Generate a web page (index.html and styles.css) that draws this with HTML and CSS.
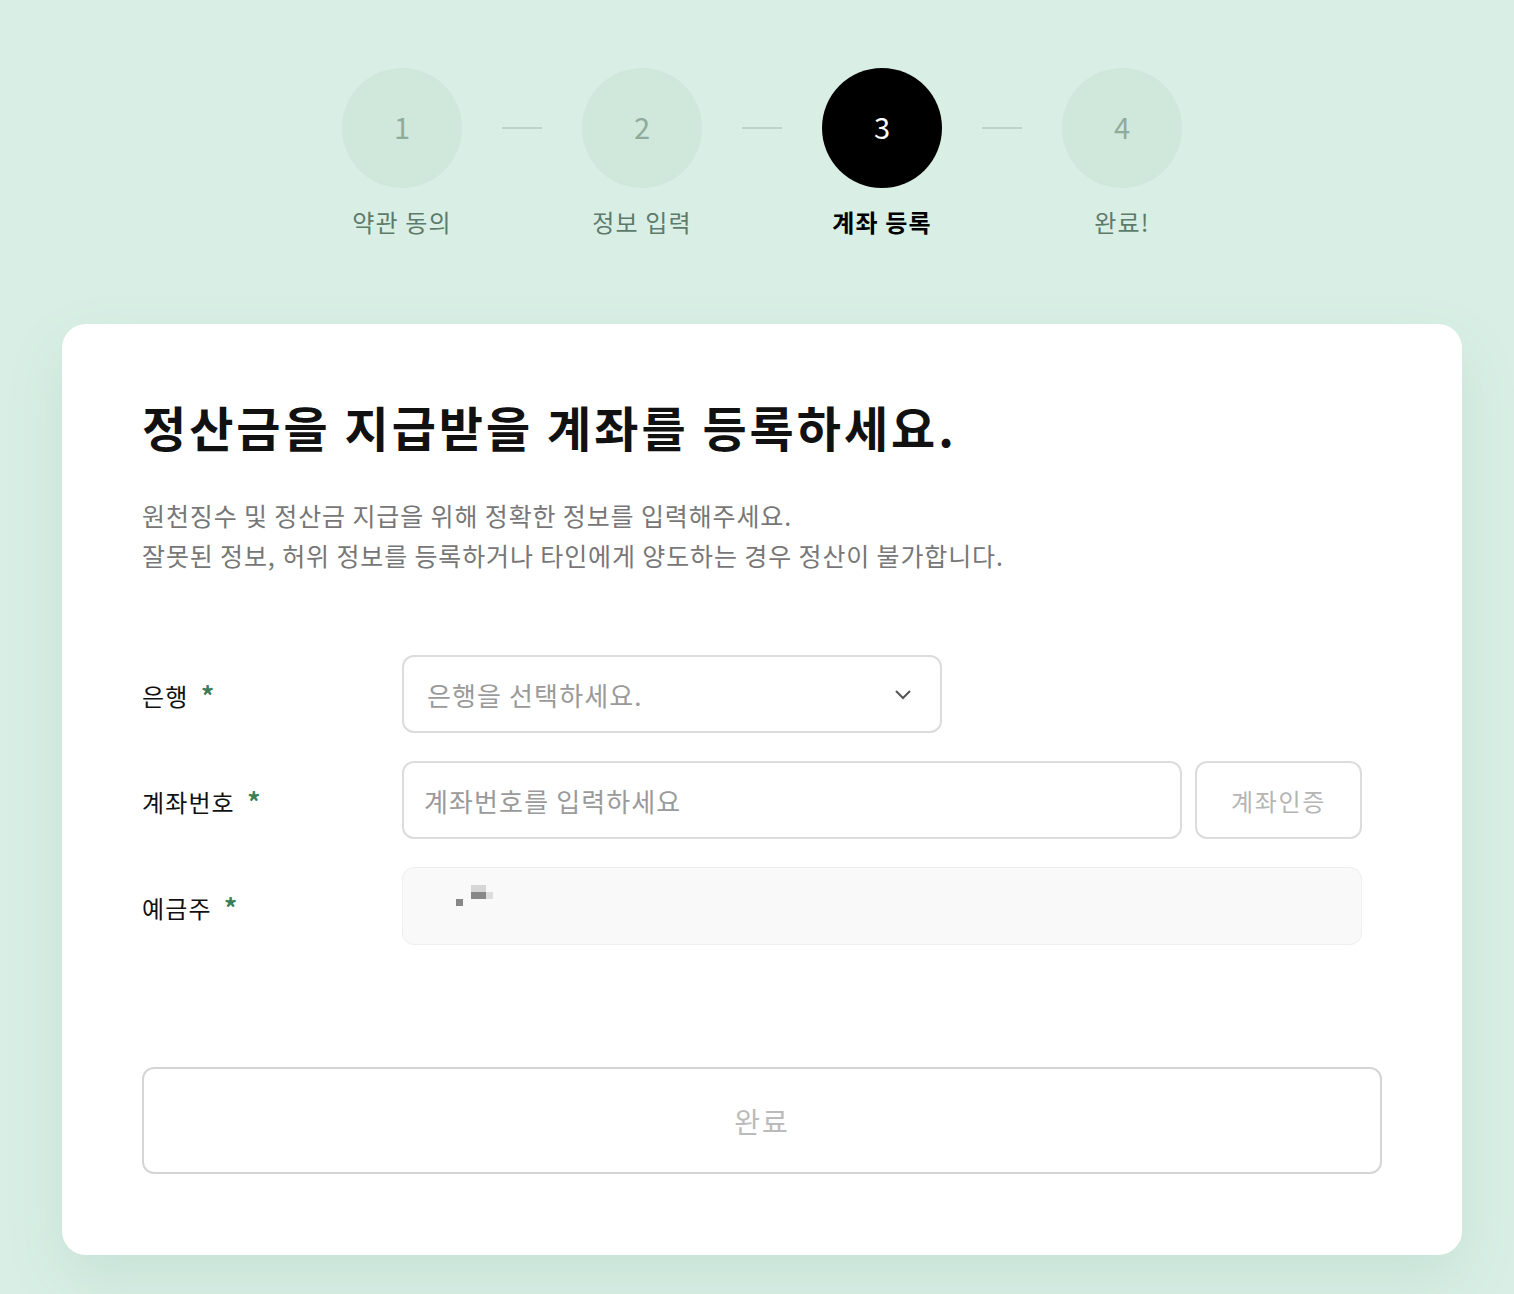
FILE: index.html
```html
<!doctype html>
<html>
<head>
  <meta charset="utf-8">
  <title>계좌 등록</title>
  <link rel="stylesheet" href="styles.css">
</head>
<body>
  <div class="page">
    <div class="steps">
      <div class="step">
        <div class="step-num">1</div>
        <div class="step-label">약관 동의</div>
      </div>
      <div class="step-line"></div>
      <div class="step">
        <div class="step-num">2</div>
        <div class="step-label">정보 입력</div>
      </div>
      <div class="step-line"></div>
      <div class="step active">
        <div class="step-num">3</div>
        <div class="step-label">계좌 등록</div>
      </div>
      <div class="step-line"></div>
      <div class="step">
        <div class="step-num">4</div>
        <div class="step-label">완료!</div>
      </div>
    </div>

    <div class="card">
      <h1 class="title">정산금을 지급받을 계좌를 등록하세요.</h1>
      <p class="desc">원천징수 및 정산금 지급을 위해 정확한 정보를 입력해주세요.<br>잘못된 정보, 허위 정보를 등록하거나 타인에게 양도하는 경우 정산이 불가합니다.</p>

      <div class="form">
        <div class="row">
          <div class="label">은행 <span class="req">*</span></div>
          <div class="select">
            <span class="placeholder">은행을 선택하세요.</span>
            <svg class="chevron" width="18" height="12" viewBox="0 0 18 12"><path d="M2 3l7 7 7-7" fill="none" stroke="#555" stroke-width="2"/></svg>
          </div>
        </div>
        <div class="row">
          <div class="label">계좌번호 <span class="req">*</span></div>
          <div class="input wide"><span class="placeholder">계좌번호를 입력하세요</span></div>
          <button class="verify">계좌인증</button>
        </div>
        <div class="row">
          <div class="label">예금주 <span class="req">*</span></div>
          <div class="input readonly">
            <svg class="masked" width="40" height="24" viewBox="0 0 40 24">
              <rect x="0" y="14" width="7" height="7" fill="#888"/>
              <rect x="15" y="0" width="15" height="7" fill="#d6d6d6"/>
              <rect x="15" y="7" width="15" height="7" fill="#888"/>
              <rect x="30" y="7" width="7" height="7" fill="#ddd"/>
            </svg>
          </div>
        </div>
      </div>

      <button class="submit">완료</button>
    </div>
  </div>
</body>
</html>
```

FILE: styles.css
```css
html, body {
  margin: 0;
  padding: 0;
}
body {
  background: #d9efe5;
  font-family: "Noto Sans CJK KR", "Noto Sans", sans-serif;
  color: #111;
  letter-spacing: 0.07em;
}
.page {
  width: 1400px;
  margin-left: 62px;
  padding: 68px 0 40px 0;
}

/* steps */
.steps {
  display: flex;
  justify-content: center;
  align-items: flex-start;
}
.step {
  width: 120px;
  display: flex;
  flex-direction: column;
  align-items: center;
}
.step-num {
  box-sizing: border-box;
  width: 120px;
  height: 120px;
  padding-bottom: 4px;
  border-radius: 50%;
  background: #d0e8dc;
  color: #8eab9c;
  font-size: 29px;
  letter-spacing: 0;
  display: flex;
  align-items: center;
  justify-content: center;
}
.step-label {
  margin-top: 17px;
  font-size: 24px;
  line-height: 34px;
  color: #5d7b6b;
  white-space: nowrap;
}
.step.active .step-num {
  background: #000;
  color: #fff;
}
.step.active .step-label {
  color: #000;
  font-weight: 700;
}
.step-line {
  width: 40px;
  height: 2px;
  margin: 59px 40px 0 40px;
  background: #bcd4c7;
}

/* card */
.card {
  margin-top: 85px;
  background: #fff;
  border-radius: 24px;
  padding: 70px 80px 81px 80px;
  box-shadow: 0 24px 60px rgba(70, 130, 100, 0.12);
}
.title {
  margin: 0;
  font-size: 48px;
  line-height: 64px;
  font-weight: 600;
  letter-spacing: 3px;
}
.desc {
  margin: 37px 0 0 0;
  font-size: 25px;
  line-height: 40px;
  letter-spacing: 0.035em;
  color: #777;
}

.form {
  margin-top: 80px;
  display: flex;
  flex-direction: column;
  gap: 28px;
}
.row {
  display: flex;
  align-items: center;
  gap: 13px;
}
.label {
  width: 247px;
  font-size: 24px;
  color: #111;
}
.req {
  color: #3c7d5c;
  font-weight: 700;
  font-size: 26px;
  margin-left: 6px;
}
.select, .input {
  box-sizing: border-box;
  height: 78px;
  border: 2px solid #dcdcdc;
  border-radius: 12px;
  display: flex;
  align-items: center;
  padding: 0 20px;
  font-size: 26px;
}
.select {
  width: 540px;
  justify-content: space-between;
  padding-left: 23px;
  padding-right: 28px;
}
.placeholder {
  color: #9a9a9a;
}
.input.wide {
  width: 780px;
}
.input.readonly {
  width: 960px;
  background: #f9f9f9;
  border: 1px solid #eeeeee;
  padding-left: 53px;
  align-items: flex-start;
  padding-top: 17px;
}
.verify {
  box-sizing: border-box;
  width: 167px;
  height: 78px;
  border: 2px solid #dcdcdc;
  border-radius: 12px;
  background: #fff;
  color: #b5b5b5;
  font-family: inherit;
  font-size: 24px;
  letter-spacing: 0.07em;
}
.submit {
  display: block;
  box-sizing: border-box;
  width: 100%;
  height: 107px;
  margin-top: 122px;
  border: 2px solid #d5d5d5;
  border-radius: 12px;
  background: #fff;
  color: #bbbbbb;
  font-family: inherit;
  font-size: 28px;
  letter-spacing: 0.07em;
}
```
